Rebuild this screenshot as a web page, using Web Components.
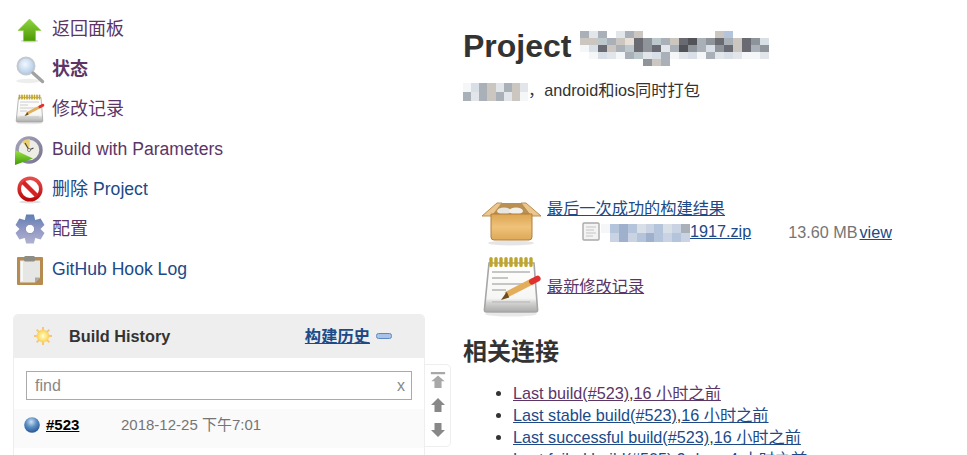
<!DOCTYPE html>
<html lang="zh">
<head>
<meta charset="utf-8">
<title>Project</title>
<style>
  html, body { margin: 0; height: 455px; overflow: hidden; background: #fff; }
  body {
    font-family: "Liberation Sans", "Noto Sans CJK SC", sans-serif;
    color: #333;
    display: flex;
    align-items: flex-start;
  }
  .en { font-size: 17.6px; }
</style>
</head>
<body>
  <side-panel>
    <task-link icon="up" visited>返回面板</task-link>
    <task-link icon="search" visited bold>状态</task-link>
    <task-link icon="notepad" visited>修改记录</task-link>
    <task-link icon="clock" visited><span class="en">Build with Parameters</span></task-link>
    <task-link icon="no">删除 <span class="en">Project</span></task-link>
    <task-link icon="gear" visited>配置</task-link>
    <task-link icon="clipboard"><span class="en">GitHub Hook Log</span></task-link>
    <build-history></build-history>
  </side-panel>
  <main-panel></main-panel>

<script>
// six toothed gear around 16,16
function gearPath() {
  let d = '';
  for (let i = 0; i < 6; i++) {
    const a = (i * 60 - 90) * Math.PI / 180;
    const pt = (r, off) => `${(16 + r * Math.cos(a + off)).toFixed(2)} ${(16 + r * Math.sin(a + off)).toFixed(2)}`;
    d += `${i ? 'L' : 'M'}${pt(10.5, -0.52)} L${pt(15, -0.26)} L${pt(15, 0.26)} L${pt(10.5, 0.52)} `;
  }
  return d + 'Z';
}

const ICONS = {
  up: `<defs><linearGradient id="g" x1="0" y1="0" x2="0" y2="1"><stop offset="0" stop-color="#8fd43f"/><stop offset="1" stop-color="#4c9a06"/></linearGradient></defs>
    <ellipse cx="15.500" cy="28" rx="9" ry="1.600" fill="#000" opacity=".13"/>
    <path d="M15.500 6 L27 17.500 H21.500 V28 H9.500 V17.500 H4 Z" fill="url(#g)" stroke="#86c83c" stroke-width=".6"/>`,
  search: `<defs><radialGradient id="g" cx=".45" cy=".4" r=".65"><stop offset="0" stop-color="#f4f8fc"/><stop offset="1" stop-color="#a8c6ea"/></radialGradient></defs>
    <ellipse cx="14" cy="28" rx="12" ry="2.200" fill="#000" opacity=".07"/>
    <circle cx="12" cy="13" r="8.500" fill="url(#g)" stroke="#c4c9cf" stroke-width="2"/>
    <path d="M19 20 L28.500 28.500" stroke="#a2a2a2" stroke-width="3.400" stroke-linecap="round"/>`,
  notepad: `<defs><linearGradient id="g" x1="0" y1="0" x2="0" y2="1"><stop offset="0" stop-color="#fff"/><stop offset=".72" stop-color="#f6f6f4"/><stop offset=".8" stop-color="#d6d6d4"/><stop offset="1" stop-color="#aaa"/></linearGradient></defs>
    <ellipse cx="15.500" cy="30" rx="13" ry="1.300" fill="#000" opacity=".09"/>
    <path d="M4.500 4.500 H27 L28.800 28 Q28.800 29 27.800 29 H3.200 Q2.200 29 2.200 28 Z" fill="url(#g)" stroke="#a6a6a6" stroke-width=".8"/>
    <path d="M5.500 2.300v3.400M8 2.300v3.400M10.500 2.300v3.400M13 2.300v3.400M15.500 2.300v3.400M18 2.300v3.400M20.500 2.300v3.400M23 2.300v3.400M25.500 2.300v3.400" stroke="#bfa52a" stroke-width="1.700" stroke-linecap="round"/>
    <path d="M6 9h19M6 12h8M6 15h16M6 18h7M6 24h19" stroke="#c6c6c6" stroke-width=".9"/>
    <path d="M13 20.500 L26.500 13.500" stroke="#e3ae5c" stroke-width="3"/>
    <path d="M26 13.800 L28.800 12.300" stroke="#e03030" stroke-width="3" stroke-linecap="round"/>
    <path d="M10.500 23 L13.400 18.900 L14.600 21.800 Z" fill="#6b4d1e"/>`,
  clock: `<defs><linearGradient id="g" x1="0" y1="0" x2="0" y2="1"><stop offset="0" stop-color="#9fe648"/><stop offset="1" stop-color="#3f9a06"/></linearGradient>
    <linearGradient id="r" x1="0" y1="0" x2="1" y2="1"><stop offset="0" stop-color="#a6a4ba"/><stop offset="1" stop-color="#77758f"/></linearGradient></defs>
    <circle cx="15" cy="17" r="12" fill="#eeede6" stroke="url(#r)" stroke-width="3.400"/>
    <path d="M15 17 L16 6 A11 11 0 0 0 8 8.500 Z" fill="#e9cf72"/>
    <path d="M15 17 L11 10 M15 17 L19.500 15" stroke="#444" stroke-width="1.100"/>
    <circle cx="15" cy="17" r="1.500" fill="#fff" stroke="#555" stroke-width=".7"/>
    <path d="M1 17 L19 25.500 L1 32 Z" fill="url(#g)"/>`,
  no: `<defs><linearGradient id="g" x1="0" y1="0" x2="0" y2="1"><stop offset="0" stop-color="#e84a4a"/><stop offset="1" stop-color="#b80c0c"/></linearGradient></defs>
    <ellipse cx="16" cy="29" rx="11" ry="1.500" fill="#000" opacity=".12"/>
    <circle cx="16" cy="16" r="10.800" fill="#fff" stroke="url(#g)" stroke-width="3.600"/>
    <path d="M9 9 L23 23" stroke="#d62222" stroke-width="4.400"/>`,
  gear: `<defs><linearGradient id="g" x1="0" y1="0" x2="0" y2="1"><stop offset="0" stop-color="#5e7fb2"/><stop offset=".5" stop-color="#9097c4"/><stop offset="1" stop-color="#b0b2cf"/></linearGradient></defs>
    <path fill="url(#g)" d="${gearPath()}"/>
    <circle cx="16" cy="16" r="4.600" fill="#fff" stroke="#7b84ad" stroke-width=".8"/>`,
  clipboard: `<rect x="3" y="4" width="26" height="28" rx="1" fill="#b58b50"/>
    <path d="M6 7.500 H26 V24.500 L21 29.500 H6 Z" fill="#e6e6e4"/>
    <path d="M26 24.500 H21 V29.500 Z" fill="#a8a8a4"/>
    <path d="M8 8.500 V28" stroke="#f8f8f8" stroke-width="2"/>
    <rect x="10" y="3" width="11" height="5.500" rx="1.500" fill="#8d8d86"/>`,
  box: `<defs><linearGradient id="g" x1="0" y1="0" x2="0" y2="1"><stop offset="0" stop-color="#dca552"/><stop offset=".5" stop-color="#efc27a"/><stop offset="1" stop-color="#dea857"/></linearGradient></defs>
    <ellipse cx="31" cy="53" rx="23" ry="2.500" fill="#000" opacity=".1"/>
    <path d="M18 13 H46 L52 24 H11 Z" fill="#b98f52"/>
    <ellipse cx="24" cy="21" rx="7" ry="3.500" fill="#e8e6e0"/><ellipse cx="36" cy="21" rx="7" ry="3.500" fill="#f2f0ea"/>
    <path d="M2 26 L17 13 L22 13 L12 26 Z M61 26 L46 13 L41 13 L51 26 Z" fill="#ecc68a" stroke="#b98f52"/>
    <path d="M11 24 H52 V47 Q52 50 49 50 H14 Q11 50 11 47 Z" fill="url(#g)" stroke="#b07f3c"/>`,
  file: `<rect x="1" y="1" width="16" height="17" rx="1" fill="#f3f3f3" stroke="#a9a9a9" stroke-width="1.400"/>
    <path d="M4 5h10M4 8h8M4 11h10M4 14h7" stroke="#c4c4c4"/>`,
  sun: `<defs><radialGradient id="g"><stop offset="0" stop-color="#fffcd8"/><stop offset="1" stop-color="#fcd648"/></radialGradient></defs>
    <g stroke="#f8c47c" stroke-width="2"><path d="M9 0v4M9 14v4M0 9h4M14 9h4M2.600 2.600l2.800 2.800M12.600 12.600l2.800 2.800M2.600 15.400l2.800-2.800M12.600 5.400l2.800-2.800"/></g>
    <circle cx="9" cy="9" r="6" fill="url(#g)" stroke="#f7cf6a" stroke-width=".6"/>`,
  ball: `<defs><radialGradient id="g" cx=".45" cy=".3" r=".75"><stop offset="0" stop-color="#cfe0f2"/><stop offset=".45" stop-color="#5c8fc4"/><stop offset="1" stop-color="#1f4f8f"/></radialGradient></defs>
    <circle cx="8" cy="8" r="7.800" fill="url(#g)"/>`,
  minus: `<rect x=".5" y=".5" width="15" height="5" rx="2" fill="#a9c3e6" stroke="#5e88c2"/>`,
  top: `<path d="M1 1h16v2.500H1zM9 5 L16.500 11.500 H13 V19 H5 V11.500 H1.500 Z" fill="#a8a8a8"/>`,
  prev: `<path d="M8 1 L15 8 H11.500 V15 H4.500 V8 H1 Z" fill="#888"/>`,
  next: `<path d="M4.500 1 H11.500 V8 H15 L8 15 L1 8 H4.500 Z" fill="#888"/>`
};

const VIEWBOX = { box: '0 0 64 64', file: '0 0 18 19', sun: '0 0 18 18', ball: '0 0 16 16',
  minus: '0 0 16 6', top: '0 0 18 20', prev: '0 0 16 16', next: '0 0 16 16' };

class JkIcon extends HTMLElement {
  connectedCallback() {
    const name = this.getAttribute('name');
    const size = this.getAttribute('size') || 32;
    const height = this.getAttribute('height') || size;
    const shadow = this.attachShadow({ mode: 'open' });
    shadow.innerHTML = `
      <style>
        :host { display: block; flex: none; line-height: 0; }
        svg { display: block; }
      </style>
      <svg xmlns="http://www.w3.org/2000/svg" width="${size}" height="${height}" viewBox="${VIEWBOX[name] || '0 0 32 32'}">${ICONS[name]}</svg>
    `;
  }
}
customElements.define('jk-icon', JkIcon);

// mosaic standing in for the blurred-out bits of the screenshot
const BLUR_COLORS = {
  a: '#f5f6f8', b: '#e2e5ea', c: '#cbc6bf', d: '#aab0b7', e: '#8f949b', f: '#6a6b72',
  g: '#525359', h: '#bcc8cc', i: '#e8dfd8', j: '#d9dfe6', k: '#b4c4da', l: '#9fb0cc', m: '#c9d3e3'
};

class BlurBlock extends HTMLElement {
  connectedCallback() {
    const rows = this.getAttribute('rows').split('|');
    const w = +this.getAttribute('cell');
    const h = +this.getAttribute('cell-h') || w;
    let rects = '';
    rows.forEach((row, y) => {
      [...row].forEach((ch, x) => {
        if (BLUR_COLORS[ch]) rects += `<rect x="${x * w}" y="${y * h}" width="${w}" height="${h}" fill="${BLUR_COLORS[ch]}"/>`;
      });
    });
    const shadow = this.attachShadow({ mode: 'open' });
    shadow.innerHTML = `
      <style>:host { display: inline-block; line-height: 0; vertical-align: middle; }</style>
      <svg xmlns="http://www.w3.org/2000/svg" width="${rows[0].length * w}" height="${rows.length * h}" shape-rendering="crispEdges">${rects}</svg>
    `;
  }
}
customElements.define('blur-block', BlurBlock);

class TaskLink extends HTMLElement {
  constructor() {
    super();
    const shadow = this.attachShadow({ mode: 'open' });
    shadow.innerHTML = `
      <style>
        :host {
          display: flex;
          align-items: center;
          gap: 6px;
          height: 40px;
          padding-left: 14px;
          font-size: 18px;
          line-height: 20px;
          color: #204a87;
        }
        :host([visited]) { color: #5c3566; }
        :host([bold]) { font-weight: bold; }
      </style>
      <jk-icon name="${this.getAttribute('icon')}"></jk-icon>
      <span><slot></slot></span>
    `;
  }
}
customElements.define('task-link', TaskLink);

class SidePanel extends HTMLElement {
  constructor() {
    super();
    const shadow = this.attachShadow({ mode: 'open' });
    shadow.innerHTML = `
      <style>
        :host { display: block; flex: none; width: 430px; padding-top: 9px; }
        .tasks { margin-bottom: 25px; }
      </style>
      <div class="tasks"><slot></slot></div>
      <slot name="after"></slot>
    `;
  }
}
customElements.define('side-panel', SidePanel);

class BuildHistory extends HTMLElement {
  constructor() {
    super();
    const shadow = this.attachShadow({ mode: 'open' });
    shadow.innerHTML = `
      <style>
        :host { display: flex; align-items: flex-start; margin-left: 13px; line-height: 20px; }
        .pane {
          width: 410px;
          height: 170px;
          flex: none;
          border: 1px solid #eee;
          border-bottom: 0;
          border-radius: 5px 5px 0 0;
          overflow: hidden;
        }
        .head {
          display: flex;
          align-items: center;
          box-sizing: border-box;
          height: 43px;
          background: #eee;
          padding: 0 32px 1px 20px;
          font-size: 16.3px;
          font-weight: bold;
        }
        .title { margin-left: 17px; flex: 1; }
        .head a { color: #204a87; text-decoration: underline; margin-right: 6px; }
        .search { padding: 13px 12px 9px; }
        .box {
          display: flex;
          justify-content: space-between;
          align-items: center;
          height: 27px;
          border: 1px solid #aaa;
          padding: 0 6px 0 8px;
          font-size: 16px;
          color: #888;
        }
        .row {
          display: flex;
          align-items: center;
          height: 39px;
          background: #fafafa;
          padding: 0 10px 7px;
          box-sizing: border-box;
          font-size: 15px;
        }
        .num { color: #000; font-weight: bold; text-decoration: underline; margin-left: 6px; width: 75px; }
        .date { color: #757575; }
        .pager {
          flex: none;
          display: flex;
          flex-direction: column;
          align-items: center;
          width: 25px;
          height: 81px;
          margin-top: 50px;
          border: 1px solid #eee;
          border-left: 0;
          border-radius: 0 5px 5px 0;
        }
        .pager .t { margin-top: 6px; }
        .pager .p { margin-top: 8px; }
        .pager .n { margin-top: 9px; }
      </style>
      <div class="pane">
        <div class="head">
          <jk-icon name="sun" size="18"></jk-icon>
          <span class="title">Build History</span>
          <a>构建历史</a>
          <jk-icon name="minus" size="16" height="6"></jk-icon>
        </div>
        <div class="search">
          <div class="box"><span>find</span><span>x</span></div>
        </div>
        <div class="row">
          <jk-icon name="ball" size="16"></jk-icon>
          <span class="num">#523</span>
          <span class="date">2018-12-25 下午7:01</span>
        </div>
      </div>
      <div class="pager">
        <jk-icon class="t" name="top" size="16" height="18"></jk-icon>
        <jk-icon class="p" name="prev" size="16"></jk-icon>
        <jk-icon class="n" name="next" size="16"></jk-icon>
      </div>
    `;
    this.slot = 'after';
  }
}
customElements.define('build-history', BuildHistory);

class ArtifactRow extends HTMLElement {
  constructor() {
    super();
    const shadow = this.attachShadow({ mode: 'open' });
    shadow.innerHTML = `
      <style>
        :host { display: flex; align-items: center; gap: 3px; height: 64px; }
        .body { flex: 1; }
      </style>
      <jk-icon name="${this.getAttribute('icon')}" size="64"></jk-icon>
      <div class="body"><slot></slot></div>
    `;
  }
}
customElements.define('artifact-row', ArtifactRow);

class MainPanel extends HTMLElement {
  constructor() {
    super();
    const shadow = this.attachShadow({ mode: 'open' });
    shadow.innerHTML = `
      <style>
        :host { display: block; flex: 1; padding: 28px 0 0 33px; font-size: 16.2px; line-height: 20px; color: #333; }
        h1 { margin: 0; font-size: 32px; line-height: 37px; font-weight: bold; white-space: nowrap; }
        .desc { margin: 14px 0 0; height: 101px; white-space: nowrap; }
        .links { margin: 9px 0 0 17px; }
        a { color: #204a87; text-decoration: underline; }
        a.seen { color: #5c3566; }
        .file { display: flex; align-items: center; margin: 4px 0 5px 35px; white-space: nowrap; height: 19px; }
        .file jk-icon { margin-right: 1px; }
        .size { color: #757575; margin-left: 37px; }
        .view { margin-left: 2px; }
        h2 { margin: 18px 0 0; font-size: 24px; line-height: 32px; font-weight: bold; }
        ul { margin: 14px 0 0; padding: 0 0 0 50px; line-height: 22px; white-space: nowrap; }
        li::marker { color: #333; }
      </style>
      <h1>Project <blur-block cell="9" cell-h="7" rows="dbd.bdc........ck.....|cchdcifehdcfgdefdcfej.|ajfcdhfefbdgedjefcfde.|.ajbadhbjdabjadbjbaab.|.......ecd............"></blur-block></h1>
      <p class="desc"><blur-block cell="8.125" cell-h="9" rows="ajdcbdcb|dbdcdbca"></blur-block>，android和ios同时打包</p>
      <div class="links">
        <artifact-row icon="box">
          <a>最后一次成功的构建结果</a>
          <div class="file">
            <jk-icon name="file" size="18" height="19"></jk-icon>
            <a><blur-block cell="8.9" rows="aklkjmkjmd|.mlmklkmkm"></blur-block>1917.zip</a>
            <span class="size">13.60 MB</span>
            <a class="view">view</a>
          </div>
        </artifact-row>
        <artifact-row icon="notepad"><a class="seen">最新修改记录</a></artifact-row>
      </div>
      <h2>相关连接</h2>
      <ul>
        <li><a class="seen">Last build(#523)</a>,<a class="seen">16 小时之前</a></li>
        <li><a>Last stable build(#523)</a>,<a>16 小时之前</a></li>
        <li><a>Last successful build(#523)</a>,<a>16 小时之前</a></li>
        <li><a>Last failed build(#505)</a>,<a>9 days 4 小时之前</a></li>
      </ul>
    `;
  }
}
customElements.define('main-panel', MainPanel);
</script>
</body>
</html>
